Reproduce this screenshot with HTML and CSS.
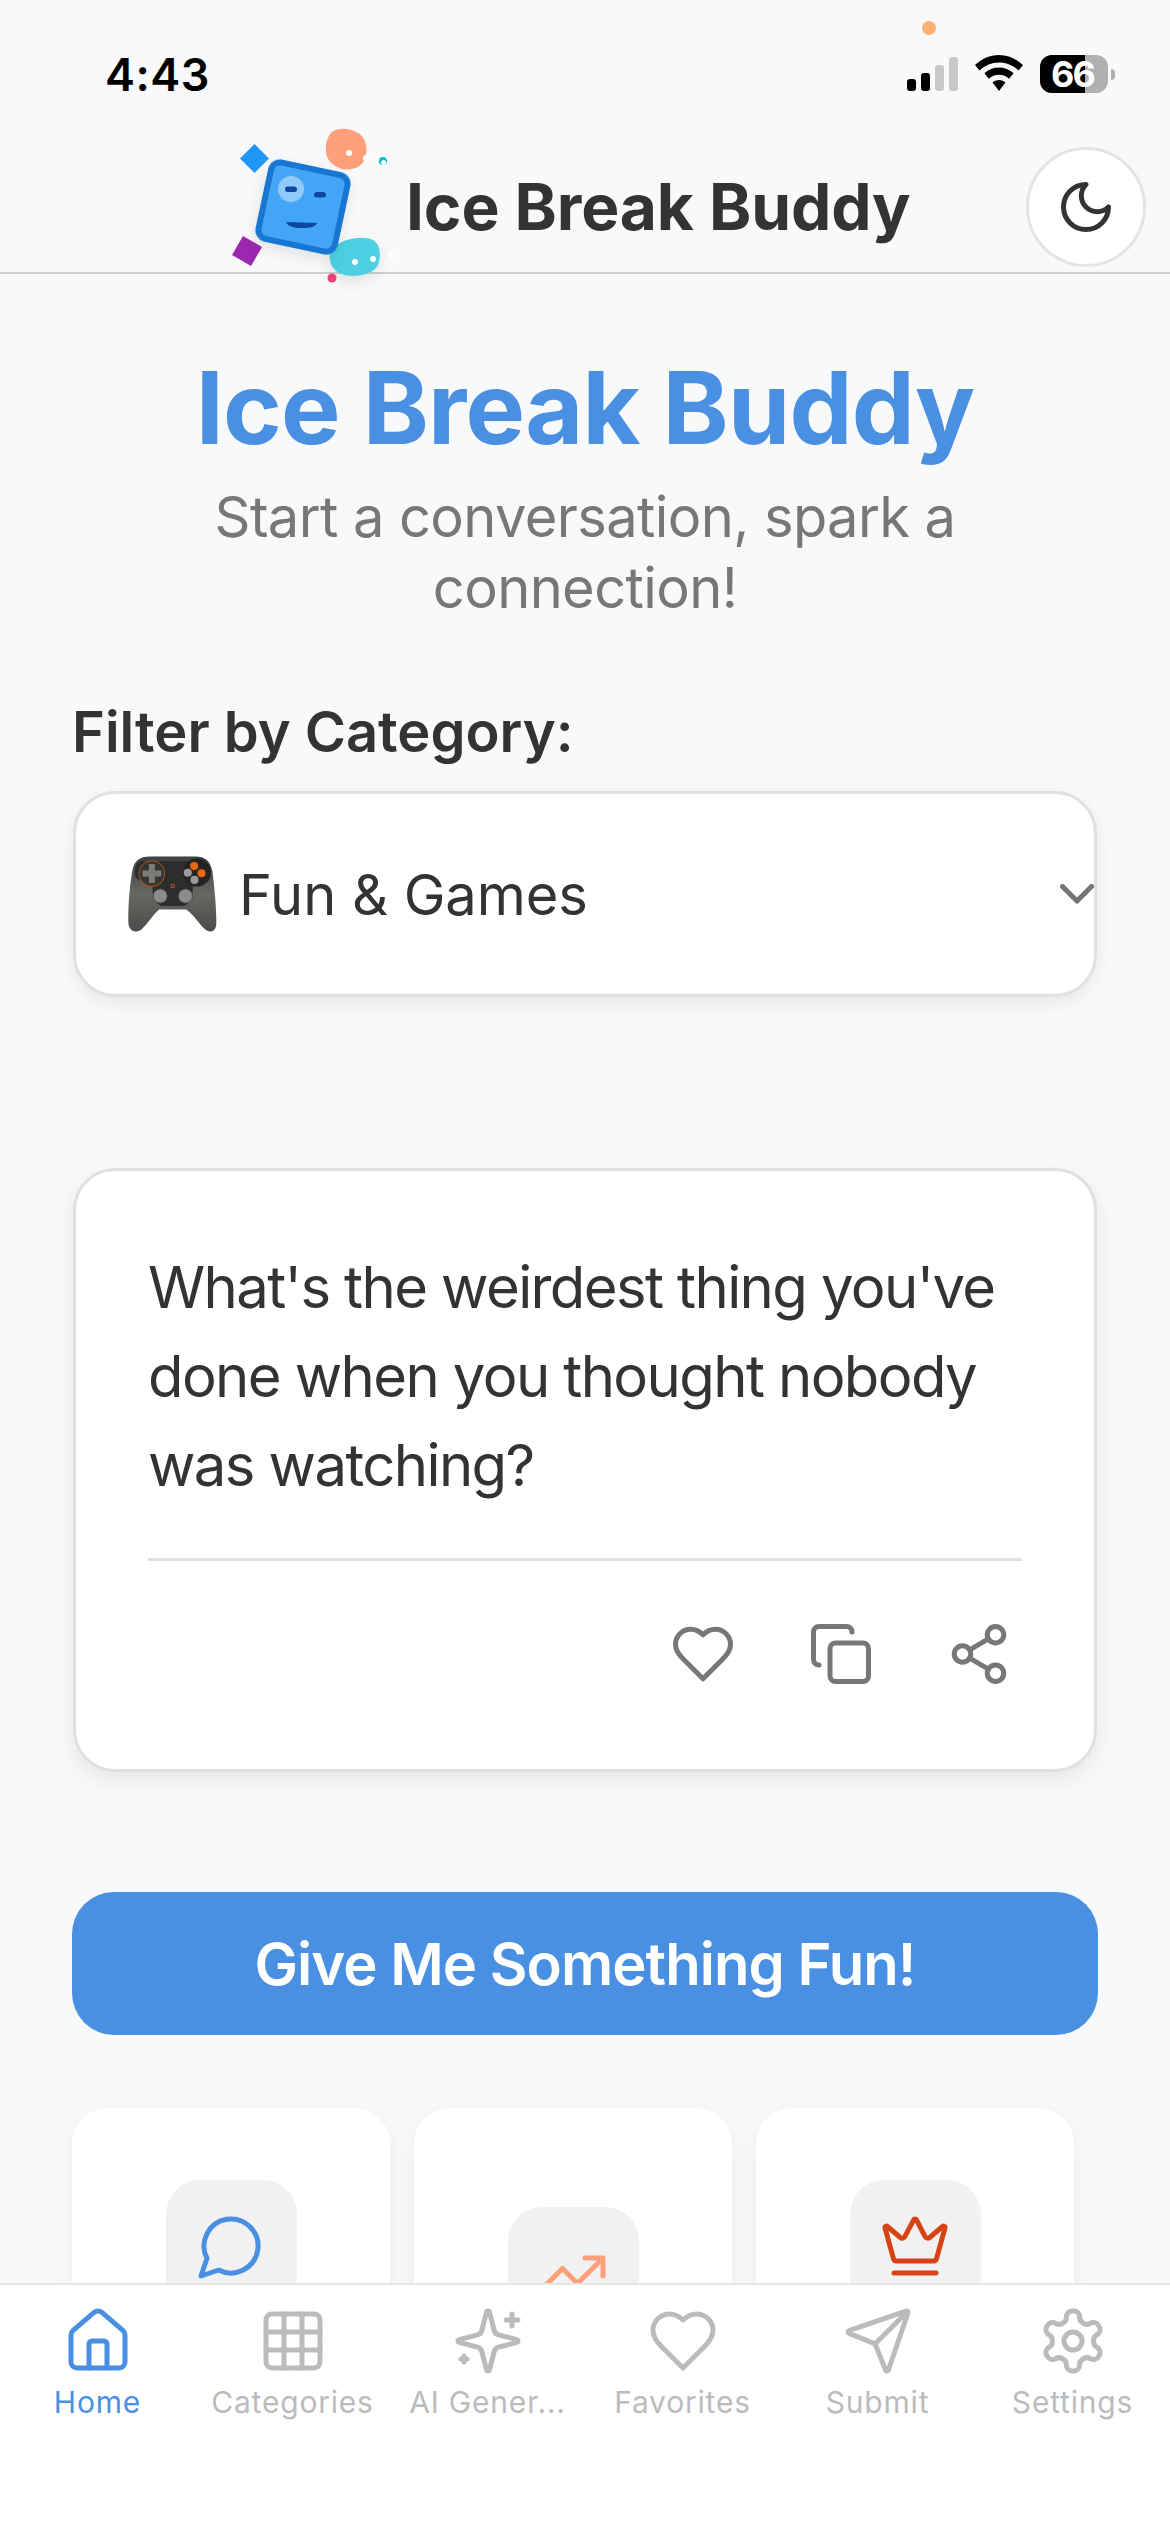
FILE: index.html
```html
<!DOCTYPE html>
<html lang="en">
<head>
<meta charset="utf-8">
<title>Ice Break Buddy</title>
<link rel="stylesheet" href="styles.css">
</head>
<body>
<div class="app">
  <div class="status">
    <span class="time">4:43</span>
    <span class="privacy-dot"></span>
    <div class="status-icons">
      <div class="signal"><i class="b1"></i><i class="b2"></i><i class="b3"></i><i class="b4"></i></div>
      <svg class="wifi" viewBox="0 0 48 36"><path d="M24 0C15 0 7 3.500 0 10l4.500 5.500C10 10.300 16.700 7.500 24 7.500s14 2.800 19.500 8L48 10C41 3.500 33 0 24 0zM24 12.500c-5.500 0-10.500 2-14.600 5.800l4.500 5.500C16.600 21.200 20.100 19.800 24 19.800s7.400 1.400 10.100 4l4.500-5.500C34.500 14.500 29.500 12.500 24 12.500zM24 25c-2.500 0-4.800 1-6.500 2.500L24 36l6.500-8.500C28.800 26 26.500 25 24 25z" fill="#000"/></svg>
      <div class="battery"><div class="battery-body"><div class="battery-fill"></div><span class="battery-text">66</span></div><span class="battery-nub"></span></div>
    </div>
  </div>

  <header class="header">
    <svg class="logo" viewBox="0 0 196 180">
      <defs>
        <filter id="soft" x="-40%" y="-40%" width="180%" height="180%"><feDropShadow dx="0" dy="5" stdDeviation="7" flood-color="#000" flood-opacity="0.10"/></filter>
      </defs>
      <path d="M122 22c8-6 22-3 29 3 6 6 7 18 3 26-4 7-14 10-22 8-9-3-15-8-16-17-1-8 1-15 6-20z" fill="#ffa07a"/>
      <circle cx="139" cy="43" r="3" fill="#fff"/><circle cx="156" cy="48" r="3" fill="#fff"/>
      <circle cx="173" cy="51" r="4" fill="#00bcd4"/><circle cx="173.500" cy="52.500" r="2.500" fill="#fff"/>
      <path d="M122 138c10-9 30-13 41-8 7 4 8 14 6 22-2 8-9 11-17 13-10 2-21 1-27-5-6-6-7-15-3-22z" fill="#4dd0e1" filter="url(#soft)"/>
      <circle cx="145" cy="152" r="3" fill="#fff"/><circle cx="163" cy="149" r="3" fill="#fff"/><circle cx="181" cy="145" r="3" fill="#fff"/>
      <circle cx="122" cy="168" r="4.500" fill="#ec407a"/>
      <path d="M44.500 34l14.500 14.500L44.500 63 30 48.500z" fill="#2196f3"/>
      <rect x="26" y="130" width="22" height="22" transform="rotate(30 37 141)" fill="#9c27b0"/>
      <g transform="rotate(12 93 97)" filter="url(#soft)">
        <rect x="54" y="58" width="78" height="78" rx="9" fill="#42a5f5" stroke="#1976d2" stroke-width="6"/>
      </g>
      <circle cx="81" cy="79" r="13" fill="#90caf9"/>
      <rect x="75" y="76.500" width="12" height="5.500" rx="2.750" fill="#0d47a1"/>
      <rect x="104" y="82" width="12" height="5.500" rx="2.750" fill="#0d47a1"/>
      <path d="M76 112l31 1c-2 4-6 5-15 5-9 0-14-2-16-6z" fill="#0d47a1"/>
    </svg>
    <h1 class="brand">Ice Break Buddy</h1>
    <button class="theme" type="button">
      <svg class="i60" viewBox="0 0 24 24"><path d="M12 3a6 6 0 0 0 9 9 9 9 0 1 1-9-9Z"/></svg>
    </button>
  </header>

  <main class="main">
    <h2 class="hero">Ice Break Buddy</h2>
    <p class="sub">Start a conversation, spark a connection!</p>
    <div class="filter-label">Filter by Category:</div>
    <div class="select">
      <svg class="pad" viewBox="235 278 265 232">
        <defs>
          <linearGradient id="padbody" x1="0" y1="0" x2="0" y2="1"><stop offset="0" stop-color="#3e403d"/><stop offset="0.5" stop-color="#666864"/><stop offset="1" stop-color="#4a4c49"/></linearGradient>
        </defs>
        <path d="M300 282C270 282 252 295 248 325 240 370 235 430 236 480c2 25 24 32 39 20 20-20 35-45 53-60h80c22 15 37 40 57 60 15 12 33 5 33-20 0-50-6-110-12-155-6-30-21-43-51-43z" fill="url(#padbody)"/>
        <path d="M272 296h190c14 8 22 28 18 46-6 10-26 18-44 18-8 0-8 8-8 20 0 24-12 50-32 50h-56c-20 0-32-26-32-50 0-12 0-20-8-20-18 0-38-8-44-18-4-18 2-38 16-46z" fill="#2c2e2c"/>
        <circle cx="306" cy="333" r="38" fill="#343633" stroke="#a94e1d" stroke-width="3"/>
        <path d="M297 305h18v19h19v18h-19v19h-18v-19h-19v-18h19z" fill="#7a7c78"/>
        <circle cx="440" cy="330" r="42" fill="#232423"/>
        <circle cx="432" cy="311" r="12" fill="#ea6510"/><circle cx="454" cy="332" r="12" fill="#ea6510"/>
        <circle cx="413" cy="331" r="12" fill="#9a9a9a"/><circle cx="433" cy="352" r="12" fill="#9a9a9a"/>
        <circle cx="331" cy="400" r="21" fill="#8a8c89" stroke="#444" stroke-width="2"/><circle cx="406" cy="400" r="21" fill="#8a8c89" stroke="#444" stroke-width="2"/>
        <circle cx="368" cy="370" r="5" fill="#3a2a20" stroke="#b4562a" stroke-width="3"/>
      </svg>
      <span class="select-text">Fun &amp; Games</span>
      <svg class="chev" viewBox="0 0 34 20"><path d="M2.500 2.500L17 17 31.500 2.500"/></svg>
    </div>

    <section class="card">
      <p class="question">What's the weirdest thing you've done when you thought nobody was watching?</p>
      <div class="actions">
        <svg class="i66" viewBox="0 0 24 24"><path d="M19 14c1.490-1.460 3-3.210 3-5.500A5.500 5.500 0 0 0 16.500 3c-1.760 0-3 .5-4.500 2-1.500-1.500-2.740-2-4.500-2A5.500 5.500 0 0 0 2 8.500c0 2.300 1.500 4.050 3 5.500l7 7Z"/></svg>
        <svg class="i66" viewBox="0 0 24 24"><rect x="8" y="8" width="14" height="14" rx="2"/><path d="M4 16c-1.100 0-2-.9-2-2V4c0-1.100.9-2 2-2h10c1.100 0 2 .9 2 2"/></svg>
        <svg class="i66" viewBox="0 0 24 24"><circle cx="18" cy="5" r="3"/><circle cx="6" cy="12" r="3"/><circle cx="18" cy="19" r="3"/><path d="M8.590 13.510l6.830 3.980M15.410 6.510l-6.820 3.980"/></svg>
      </div>
    </section>

    <button class="cta" type="button">Give Me Something Fun!</button>

    <div class="features">
      <div class="feature">
        <div class="feature-icon blue"><svg class="i72" viewBox="0 0 24 24"><path d="M7.900 20A9 9 0 1 0 4 16.100L2 22Z"/></svg></div>
      </div>
      <div class="feature feature-low">
        <div class="feature-icon salmon"><svg class="i72" viewBox="0 0 24 24"><path d="M22 7l-8.500 8.500-5-5L2 17M16 7h6v6"/></svg></div>
      </div>
      <div class="feature">
        <div class="feature-icon red"><svg class="i72" viewBox="0 0 24 24"><path d="M11.562 3.266a.5.5 0 0 1 .876 0L15.390 8.870a1 1 0 0 0 1.516.294L21.183 5.500a.5.5 0 0 1 .798.519l-2.834 10.246a1 1 0 0 1-.956.734H5.810a1 1 0 0 1-.957-.734L2.020 6.020a.5.5 0 0 1 .798-.519l4.276 3.664a1 1 0 0 0 1.516-.294z"/><path d="M5 21h14"/></svg></div>
      </div>
    </div>
  </main>

  <nav class="tabs">
    <div class="tab active">
      <svg class="i72" viewBox="0 0 24 24"><path d="M15 21v-8a1 1 0 0 0-1-1h-4a1 1 0 0 0-1 1v8"/><path d="M3 10a2 2 0 0 1 .709-1.528l7-5.999a2 2 0 0 1 2.582 0l7 5.999A2 2 0 0 1 21 10v9a2 2 0 0 1-2 2H5a2 2 0 0 1-2-2z"/></svg>
      <span class="tab-label">Home</span>
    </div>
    <div class="tab">
      <svg class="i72" viewBox="0 0 24 24"><rect x="3" y="3" width="18" height="18" rx="2"/><path d="M3 9h18M3 15h18M9 3v18M15 3v18"/></svg>
      <span class="tab-label">Categories</span>
    </div>
    <div class="tab">
      <svg class="i72" viewBox="0 0 24 24"><path d="M9.937 15.500A2 2 0 0 0 8.500 14.063l-6.135-1.582a.5.5 0 0 1 0-.962L8.500 9.936A2 2 0 0 0 9.937 8.500l1.582-6.135a.5.5 0 0 1 .963 0L14.063 8.500A2 2 0 0 0 15.500 9.937l6.135 1.581a.5.5 0 0 1 0 .964L15.500 14.063a2 2 0 0 0-1.437 1.437l-1.582 6.135a.5.5 0 0 1-.963 0z"/><path d="M20 3v4M22 5h-4M4 17v2M5 18H3"/></svg>
      <span class="tab-label">AI Gener...</span>
    </div>
    <div class="tab">
      <svg class="i72" viewBox="0 0 24 24"><path d="M19 14c1.490-1.460 3-3.210 3-5.500A5.500 5.500 0 0 0 16.500 3c-1.760 0-3 .5-4.500 2-1.500-1.500-2.740-2-4.500-2A5.500 5.500 0 0 0 2 8.500c0 2.300 1.500 4.050 3 5.500l7 7Z"/></svg>
      <span class="tab-label">Favorites</span>
    </div>
    <div class="tab">
      <svg class="i72" viewBox="0 0 24 24"><path d="M14.536 21.686a.5.5 0 0 0 .937-.024l6.500-19a.496.496 0 0 0-.635-.635l-19 6.500a.5.5 0 0 0-.024.937l7.930 3.180a2 2 0 0 1 1.112 1.110z"/><path d="M21.854 2.147l-10.940 10.939"/></svg>
      <span class="tab-label">Submit</span>
    </div>
    <div class="tab">
      <svg class="i72" viewBox="0 0 24 24"><path d="M12.220 2h-.44a2 2 0 0 0-2 2v.18a2 2 0 0 1-1 1.730l-.43.25a2 2 0 0 1-2 0l-.15-.08a2 2 0 0 0-2.730.73l-.22.38a2 2 0 0 0 .73 2.730l.15.1a2 2 0 0 1 1 1.720v.51a2 2 0 0 1-1 1.740l-.15.09a2 2 0 0 0-.73 2.730l.22.38a2 2 0 0 0 2.730.73l.15-.08a2 2 0 0 1 2 0l.43.25a2 2 0 0 1 1 1.730V20a2 2 0 0 0 2 2h.44a2 2 0 0 0 2-2v-.18a2 2 0 0 1 1-1.730l.43-.25a2 2 0 0 1 2 0l.15.08a2 2 0 0 0 2.730-.73l.22-.39a2 2 0 0 0-.73-2.730l-.15-.08a2 2 0 0 1-1-1.740v-.5a2 2 0 0 1 1-1.740l.15-.09a2 2 0 0 0 .73-2.730l-.22-.38a2 2 0 0 0-2.730-.73l-.15.08a2 2 0 0 1-2 0l-.43-.25a2 2 0 0 1-1-1.730V4a2 2 0 0 0-2-2z"/><circle cx="12" cy="12" r="3"/></svg>
      <span class="tab-label">Settings</span>
    </div>
  </nav>
</div>
</body>
</html>
```
FILE: styles.css
```css
* { box-sizing: border-box; }
html, body { margin: 0; padding: 0; }
body { background: #f8f9fa; font-family: Inter, "Liberation Sans", sans-serif; color: #333; }
svg { display: block; flex: none; fill: none; stroke-linecap: round; stroke-linejoin: round; }
h1, h2, p { margin: 0; }

.app { width: 1170px; height: 2532px; display: flex; flex-direction: column; overflow: hidden; position: relative; }

.status { height: 110px; flex: none; display: flex; align-items: flex-start; justify-content: space-between; padding: 50px 55px 0 105px; }
.time { font-size: 45px; line-height: 50px; font-weight: 600; color: #000; letter-spacing: 0.5px; }
.privacy-dot { position: absolute; left: 922px; top: 21px; width: 14px; height: 14px; border-radius: 50%; background: #ffb073; }
.status-icons { display: flex; align-items: flex-start; padding-top: 5px; }
.signal { display: flex; align-items: flex-end; gap: 5px; height: 36px; width: 51px; margin-top: 0; }
.signal i { display: block; width: 9px; border-radius: 3px; background: #c7c8ca; }
.signal .b1 { height: 12px; background: #000; }
.signal .b2 { height: 18px; background: #000; }
.signal .b3 { height: 26px; }
.signal .b4 { height: 34px; }
.wifi { width: 48px; height: 36px; margin-left: 17px; }
.battery { display: flex; align-items: center; margin-left: 17px; }
.battery-body { position: relative; width: 68px; height: 38px; border-radius: 12px; background: #b0b0b2; display: flex; align-items: center; justify-content: center; }
.battery-fill { position: absolute; left: 0; top: 0; bottom: 0; width: 45px; background: #000; border-radius: 12px 0 0 12px; }
.battery-text { position: relative; color: #fff; font-size: 36px; font-weight: 700; line-height: 38px; letter-spacing: -2px; padding-right: 3px; }
.battery-nub { width: 4px; height: 11px; margin-left: 3px; background: #b0b0b2; border-radius: 0 4px 4px 0; }

.header { flex: none; height: 164px; position: relative; z-index: 2; display: flex; align-items: center; padding: 32px 24px 0 210px; border-bottom: 2px solid #cfcfd1; }
.logo { width: 196px; height: 180px; align-self: flex-start; margin-top: -32px; overflow: visible; }
.brand { font-size: 64px; line-height: 80px; font-weight: 700; color: #333; letter-spacing: -0.1px; white-space: nowrap; }
.theme { margin: 0 0 0 auto; padding: 0; width: 120px; height: 120px; border-radius: 50%; border: 3px solid #e4e4e4; background: #fff; display: flex; align-items: center; justify-content: center; }
.i60 { width: 60px; height: 60px; stroke: #333; stroke-width: 2; }

.main { flex: 1; min-height: 0; overflow: hidden; padding: 74px 72px 0; display: flex; flex-direction: column; }
.hero { font-size: 100px; line-height: 120px; font-weight: 700; color: #4a90e2; text-align: center; letter-spacing: -0.8px; }
.sub { margin: 14px auto 0; width: 800px; font-size: 56px; line-height: 71px; color: #777; text-align: center; letter-spacing: -0.6px; }
.filter-label { margin-top: 73px; font-size: 56px; line-height: 70px; font-weight: 600; color: #333; letter-spacing: 0; }

.select { margin: 24px 1px 0; height: 206px; flex: none; display: flex; align-items: center; background: #fff; border: 3px solid #e0e0e0; border-radius: 42px; padding-left: 52px; box-shadow: 0 6px 18px rgba(0,0,0,.07); }
.pad { width: 89px; height: 78px; }
.select-text { margin-left: 22px; padding-top: 2px; font-size: 56px; line-height: 70px; color: #333; letter-spacing: -0.05px; }
.chev { width: 34px; height: 20px; margin-left: auto; stroke: #757575; stroke-width: 5; }

.card { margin: 171px 1px 0; height: 604px; flex: none; background: #fff; border: 3px solid #e0e0e0; border-radius: 42px; padding: 72px 72px 0; box-shadow: 0 8px 22px rgba(0,0,0,.08); }
.question { font-size: 58px; line-height: 89px; color: #333; letter-spacing: -1.6px; padding-bottom: 48px; border-bottom: 3px solid #e0e0e0; }
.actions { display: flex; justify-content: flex-end; gap: 72px; padding-top: 60px; padding-right: 10px; }
.i66 { width: 66px; height: 66px; stroke: #777; stroke-width: 1.820; }

.cta { margin-top: 120px; height: 143px; flex: none; width: 100%; border: 0; border-radius: 42px; background: #4a90e2; color: #fff; font-family: inherit; font-size: 58px; font-weight: 600; letter-spacing: -0.95px; padding: 0; }

.features { margin-top: 73px; display: flex; gap: 24px; flex: none; }
.feature { width: 318px; height: 320px; flex: none; background: #fff; border-radius: 36px; padding-top: 72px; display: flex; flex-direction: column; align-items: center; box-shadow: 0 6px 20px rgba(0,0,0,.06); }
.feature-low { padding-top: 99px; }
.feature-icon { width: 131px; height: 132px; border-radius: 34px; background: #f1f1f1; display: flex; align-items: center; justify-content: center; }
.i72 { width: 72px; height: 72px; stroke-width: 1.670; stroke: currentColor; }
.blue { color: #4a90e2; }
.salmon { color: #ffa07a; }
.red { color: #d84315; }

.tabs { flex: none; height: 249px; background: #fff; border-top: 2px solid #e5e5e5; display: flex; position: relative; z-index: 1; padding-top: 20px; }
.tab { flex: 1; min-width: 0; display: flex; flex-direction: column; align-items: center; color: #bbb; }
.tab.active { color: #4a90e2; }
.tab-label { margin-top: 7px; font-size: 30px; line-height: 36px; font-weight: 400; letter-spacing: 0.8px; white-space: nowrap; }
```
